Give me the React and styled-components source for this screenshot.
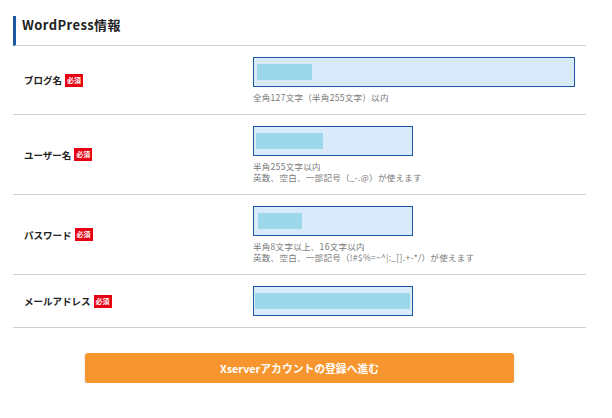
import React from "react";
import styled, { createGlobalStyle } from "styled-components";

const GlobalStyle = createGlobalStyle`
  body {
    margin: 0;
    background: #fff;
    font-family: "Noto Sans CJK JP", "Noto Sans", sans-serif;
    color: #333;
  }
`;

const fields = [
  {
    label: "ブログ名",
    width: 322,
    fill: 55,
    offset: 3,
    help: ["全角127文字（半角255文字）以内"],
  },
  {
    label: "ユーザー名",
    width: 160,
    fill: 67,
    offset: 2,
    help: ["半角255文字以内", "英数、空白、一部記号（_-.@）が使えます"],
  },
  {
    label: "パスワード",
    width: 160,
    fill: 44,
    offset: 4,
    help: [
      "半角8文字以上、16文字以内",
      "英数、空白、一部記号（!#$%=~^|:_[].+-*/）が使えます",
    ],
  },
  {
    label: "メールアドレス",
    width: 160,
    fill: 155,
    offset: 1,
    help: [],
  },
];

function App() {
  return (
    <Page>
      <GlobalStyle />
      <Heading>WordPress情報</Heading>
      <Form>
        {fields.map((f) => (
          <Row key={f.label}>
            <Label>
              {f.label}
              <Badge>必須</Badge>
            </Label>
            <FieldCell>
              <Field width={f.width}>
                <Fill width={f.fill} offset={f.offset} />
              </Field>
              {f.help.length > 0 && (
                <Help>
                  {f.help.map((line) => (
                    <div key={line}>{line}</div>
                  ))}
                </Help>
              )}
            </FieldCell>
          </Row>
        ))}
      </Form>
      <Actions>
        <SubmitButton>Xserverアカウントの登録へ進む</SubmitButton>
      </Actions>
    </Page>
  );
}

export default App;

const Page = styled.div`
  width: 573px;
  padding: 16px 0 0 13px;
`;

const Heading = styled.h2`
  margin: 0;
  height: 18px;
  border-left: 3px solid #1a5aa0;
  padding-left: 6px;
  padding-bottom: 11px;
  border-bottom: 1px solid #cfcfcf;
  font-size: 13px;
  font-weight: 700;
  line-height: 18px;
  letter-spacing: 0.4px;
  color: #222;
`;

const Form = styled.div``;

const Row = styled.div`
  display: flex;
  align-items: center;
  border-bottom: 1px solid #cfcfcf;
  padding: 11px 0;
`;

const Label = styled.div`
  width: 240px;
  padding-left: 11px;
  box-sizing: border-box;
  display: flex;
  align-items: center;
  gap: 3px;
  font-size: 9.5px;
  font-weight: 700;
  color: #222;
`;

const Badge = styled.span`
  background: #e60012;
  color: #fff;
  font-size: 7px;
  font-weight: 700;
  line-height: 13px;
  padding: 0 2px;
`;

const FieldCell = styled.div`
  flex: 1;
`;

const Field = styled.div`
  width: ${(p) => p.width}px;
  height: 30px;
  box-sizing: border-box;
  border: 1px solid #1a5aa0;
  background: #d9eafb;
  display: flex;
  align-items: center;
`;

const Fill = styled.span`
  display: block;
  width: ${(p) => p.width}px;
  height: 16px;
  margin-left: ${(p) => p.offset}px;
  background: #9cd8ea;
`;

const Help = styled.div`
  margin-top: 5px;
  font-size: 8.5px;
  line-height: 11px;
  letter-spacing: 0.3px;
  color: #777;
`;

const Actions = styled.div`
  display: flex;
  justify-content: center;
  padding-top: 25px;
`;

const SubmitButton = styled.button`
  width: 429px;
  height: 30px;
  border: 0;
  border-radius: 3px;
  background: #f7962f;
  color: #fff;
  font-family: "Noto Sans CJK JP", "Noto Sans", sans-serif;
  font-size: 10.8px;
  font-weight: 700;
  box-shadow: 0 1px 2px rgba(0, 0, 0, 0.2);
`;
